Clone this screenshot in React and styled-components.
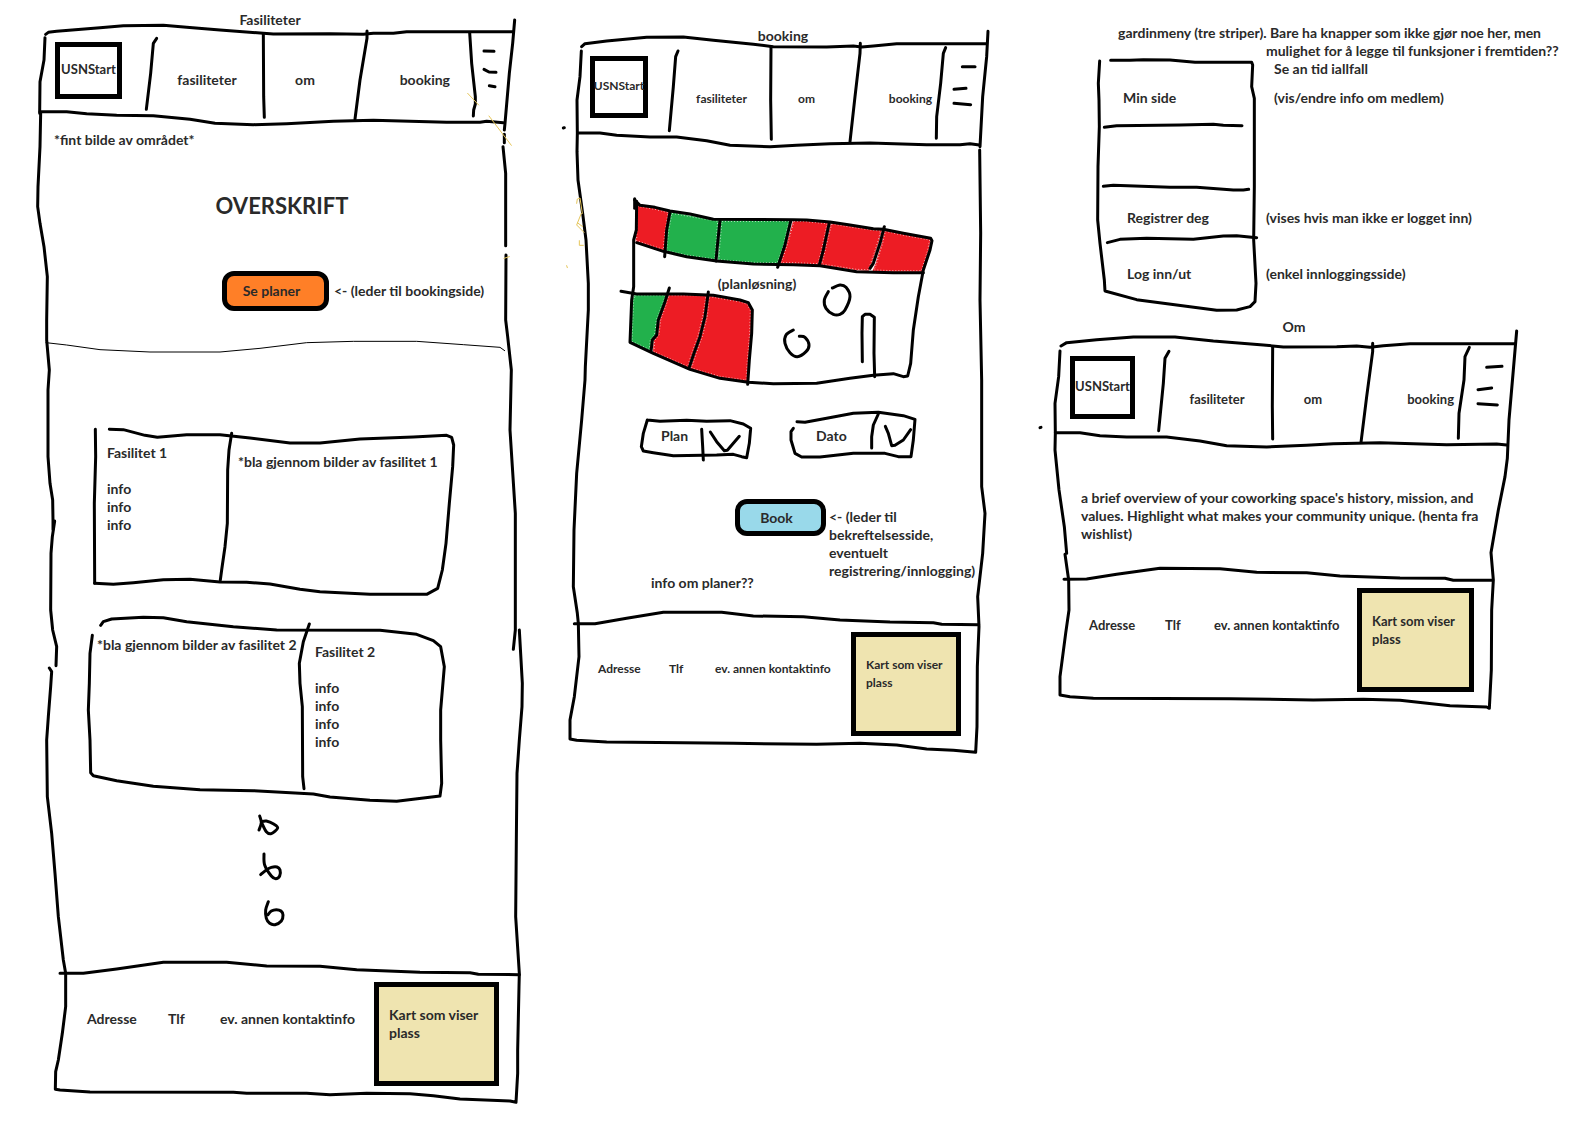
import React from "react";
import styled, { createGlobalStyle, css } from "styled-components";

const GlobalStyle = createGlobalStyle`
  *, *::before, *::after { box-sizing: border-box; }
  body {
    margin: 0;
    background: #fff;
    color: #2a2a2a;
    font: 700 14px/18px Lato, "Open Sans", sans-serif;
  }
  h1, h2, h3, p, ul, figure { margin: 0; padding: 0; font: inherit; list-style: none; }
`;

/* ---------- hand-drawn ink ---------- */

const InkLayer = styled.svg`
  position: absolute;
  inset: 0;
  width: 100%;
  height: 100%;
  overflow: visible;
  pointer-events: none;
  z-index: 0;
`;

const ink = css`
  fill: none;
  stroke: ${(p) => p.$color || "#000"};
  stroke-width: ${(p) => p.$width || 3}px;
  stroke-linecap: round;
  stroke-linejoin: round;
  vector-effect: non-scaling-stroke;
`;

const Stroke = styled.polyline`${ink}`;
const Curve = styled.path`${ink}`;

const DeskFill = styled.polygon`
  fill: ${(p) => (p.$free ? "#22b14c" : "#ed1c24")};
  stroke: ${(p) => (p.$free ? "#22b14c" : "#ed1c24")};
  stroke-width: 2px;
  vector-effect: non-scaling-stroke;
`;

const DeskEdge = styled.polygon`
  fill: none;
  stroke: #fff;
  stroke-opacity: 0.7;
  stroke-width: 1px;
  stroke-dasharray: 1 2;
  vector-effect: non-scaling-stroke;
`;

const Strokes = ({ lines, color, width }) =>
  lines.map((points) => <Stroke key={points} points={points} $color={color} $width={width} />);

/* Runs a smooth curve through every listed point. */
function curveThrough(points) {
  const p = points.split(" ").map((pair) => pair.split(",").map(Number));
  let d = `M${p[0]}`;
  for (let i = 0; i < p.length - 1; i += 1) {
    const before = p[i - 1] || p[i];
    const from = p[i];
    const to = p[i + 1];
    const after = p[i + 2] || to;
    const a = [from[0] + (to[0] - before[0]) / 6, from[1] + (to[1] - before[1]) / 6];
    const b = [to[0] - (after[0] - from[0]) / 6, to[1] - (after[1] - from[1]) / 6];
    d += `C${a} ${b} ${to}`;
  }
  return d;
}

const Curves = ({ lines }) => lines.map((points) => <Curve key={points} d={curveThrough(points)} />);

const YELLOW = "#e6c65a";

/* ---------- shared parts ---------- */

const Board = styled.main`
  display: grid;
  grid-template-columns: 540fr 500fr 552fr;
  align-items: start;
`;

const Screen = styled.section`
  position: relative;
  padding: ${(p) => p.$pad};
`;

const Content = styled.div`
  position: relative;
  z-index: 1;
`;

const ScreenTitle = styled.h2`
  text-align: center;
`;

const Header = styled.header`
  display: grid;
  grid-template-columns: ${(p) => p.$columns};
  align-items: start;
  padding: ${(p) => p.$top}px 0 24px;
`;

const Logo = styled.a`
  display: flex;
  justify-content: center;
  width: ${(p) => p.$width}px;
  height: ${(p) => p.$height}px;
  margin-left: ${(p) => p.$left}px;
  padding-top: ${(p) => p.$textTop}px;
  border: 5px solid #000;
  color: inherit;
  font-size: ${(p) => p.$size}px;
  text-decoration: none;
`;

const NavLink = styled.a`
  margin-top: ${(p) => p.$drop}px;
  padding-right: ${(p) => p.$right || 0}px;
  color: inherit;
  font-size: ${(p) => p.$size}px;
  text-align: ${(p) => (p.$right ? "right" : "center")};
  text-decoration: none;
`;

const MenuButton = styled.button`
  height: 55px;
  padding: 0;
  border: 0;
  background: none;
  cursor: pointer;

  svg { display: block; width: 100%; height: 100%; overflow: visible; }
`;

const Footer = styled.footer`
  display: grid;
  grid-template-columns: ${(p) => p.$columns};
  align-items: start;
  padding: 10px ${(p) => p.$right}px 0 ${(p) => p.$left}px;
`;

const Contact = styled.span`
  margin-top: 28px;
  font-size: ${(p) => p.$size}px;
  white-space: nowrap;
`;

const MapBox = styled.div`
  height: 104px;
  padding: 19px 10px;
  border: 5px solid #000;
  background: #efe4b0;
  font-size: ${(p) => p.$size}px;
`;

const ActionButton = styled.button`
  flex: none;
  width: ${(p) => p.$width}px;
  height: ${(p) => p.$height}px;
  padding: 0 8px 0 0;
  border: 5px solid #000;
  border-radius: 12px;
  background: ${(p) => p.$fill};
  color: inherit;
  font: inherit;
  cursor: pointer;
`;

function SiteHeader({ columns, top, logo, drop, bookingRight, size, menuBox, menuLines }) {
  return (
    <Header $columns={columns} $top={top}>
      <Logo
        href="#start"
        $width={logo.width}
        $height={logo.height}
        $left={logo.left}
        $textTop={logo.textTop}
        $size={logo.size}
      >
        USNStart
      </Logo>
      <NavLink href="#fasiliteter" $drop={drop} $size={size}>fasiliteter</NavLink>
      <NavLink href="#om" $drop={drop} $size={size}>om</NavLink>
      <NavLink href="#booking" $drop={drop} $size={size} $right={bookingRight}>booking</NavLink>
      <MenuButton type="button" aria-label="Meny">
        <svg viewBox={menuBox} preserveAspectRatio="none" aria-hidden="true">
          <Strokes lines={menuLines} />
        </svg>
      </MenuButton>
    </Header>
  );
}

function SiteFooter({ columns, left, right, size }) {
  return (
    <Footer $columns={columns} $left={left} $right={right}>
      <Contact $size={size}>Adresse</Contact>
      <Contact $size={size}>Tlf</Contact>
      <Contact $size={size}>ev. annen kontaktinfo</Contact>
      <MapBox $size={size}>Kart som viser plass</MapBox>
    </Footer>
  );
}

/* ---------- Fasiliteter ---------- */

const Hero = styled.section`
  padding: 8px 0 36px;
`;

const HeroCaption = styled.p`
  padding-left: 16px;
`;

const Headline = styled.h1`
  margin-top: 42px;
  padding-left: 24px;
  font-size: 22px;
  line-height: 30px;
  font-weight: 700;
  text-align: center;
`;

const HeroAction = styled.div`
  display: flex;
  align-items: center;
  gap: 5px;
  margin-top: 50px;
  padding-left: 184px;
  white-space: nowrap;
`;

const Facilities = styled.section`
  display: grid;
  gap: 23px;
  padding: 83px 54px 0;
`;

const Facility = styled.article`
  display: grid;
  grid-template-columns: ${(p) => p.$columns};
  min-height: ${(p) => p.$height}px;
`;

const FacilityCell = styled.div`
  padding: ${(p) => p.$top}px 0 0 ${(p) => p.$left}px;
  white-space: nowrap;

  ul { margin-top: 18px; }
`;

const More = styled.svg`
  display: block;
  width: 34px;
  height: 114px;
  margin: 11px auto 45px;
  overflow: visible;
`;

const FacilityInfo = ({ name, lines, top, left }) => (
  <FacilityCell $top={top} $left={left}>
    <h3>{name}</h3>
    <ul>
      {Array.from({ length: lines }, (_, i) => <li key={i}>info</li>)}
    </ul>
  </FacilityCell>
);

function FacilitiesScreen() {
  return (
    <Screen $pad="11px 38px 38px" id="fasiliteter">
      <InkLayer viewBox="-60 0 1620 3372" preserveAspectRatio="none" aria-hidden="true">
        <Strokes
          lines={[
            "77,103 85,97 110,94 240,83 310,77 430,76 500,82 600,90 730,100 760,102 930,101 1030,103 1060,100 1120,100 1160,95 1478,95",
            "75,113 72,180 60,245 59,340",
            "62,340 60,440 54,560 53,620 60,670 72,740 82,830 80,960 80,1020 88,1110 84,1170 84,1370 90,1450 98,1500 99,1560 99,1588",
            "60,335 140,335 200,341 290,346 400,347 510,358 585,370 700,374 800,371 940,364 1060,361 1280,367 1380,367 1400,364 1450,368",
            "410,115 400,130 392,220 379,328",
            "730,102 731,290 733,352",
            "1041,93 1041,115 1020,240 1005,357",
            "1349,98 1355,190 1366,290 1366,312 1361,330 1360,348",
            "1484,60 1478,130 1468,220 1455,370 1453,390",
            "1453,403 1453,428",
            "1449,440 1457,520 1457,737",
            "1458,765 1457,960 1463,1010 1474,1110 1470,1290 1477,1400 1486,1540 1486,1890 1480,1948",
          ]}
        />
        <Strokes width={1} lines={["78,1028 140,1035 240,1049 390,1056 600,1056 720,1045 860,1028 1000,1024 1190,1024 1330,1034 1440,1042 1454,1052"]} />
        <Strokes width={1} color={YELLOW} lines={["1343,280 1376,315", "1407,348 1474,436", "1452,775 1468,770"]} />
        <g transform="translate(0 1110)">
          <Strokes
            lines={[
              "104,453 97,500 93,550 92,720 98,780 110,830 108,887",
              "226,178 227,260 223,400 224,640",
              "268,178 310,179 375,196 412,202 500,194 600,194 690,204 810,219 900,219 1020,207 1180,201 1280,196 1295,202 1301,225 1298,290 1288,400 1278,520 1267,600 1253,655 1220,673 1050,673 900,665 840,658 750,642 680,637 600,636 510,628 430,629 340,638 280,643 224,640",
              "635,190 627,240 623,300 622,460 615,530 605,600 601,630",
              "242,766 250,755 275,747 370,742 430,743 500,755 640,770 770,780 1080,781 1190,793 1240,812 1262,830 1273,890 1262,1020 1262,1110 1265,1240 1260,1278 1130,1294 1050,1291 930,1281 880,1272 700,1262 540,1259 400,1249 290,1232 220,1217 212,1208 210,1110 205,1020 208,940 210,850 217,796",
              "868,762 850,815 838,880 840,940 847,1010 848,1220 852,1256",
            ]}
          />
        </g>
        <g transform="translate(0 2220)">
          <Strokes
            lines={[
              "88,-216 95,-205 92,-160 85,-70 80,0 82,170 95,280 105,400 115,530 130,660 137,700 137,800 127,880 115,960 107,995 106,1048 120,1050 210,1056 640,1057 680,1060 860,1060 930,1064 1040,1060 1170,1061 1240,1067 1320,1077 1470,1083 1488,1087 1493,1000 1493,930 1497,740 1498,700 1487,530 1489,300 1491,100 1498,0 1506,-100 1507,-170 1498,-330",
              "120,700 190,700 290,687 430,667 620,667 740,678 900,679 1010,689 1200,697 1350,698 1375,703 1498,704",
            ]}
          />
        </g>
      </InkLayer>
      <Content>
        <ScreenTitle>Fasiliteter</ScreenTitle>
        <SiteHeader
          columns="114fr 110fr 86fr 124fr 30fr"
          top={13}
          logo={{ width: 67, height: 57, left: 17, textTop: 13, size: 13 }}
          drop={29}
          bookingRight={22}
          size={14}
          menuBox="1356 126 90 165"
          menuLines={["1392,153 1422,154", "1392,208 1407,216 1428,217", "1408,257 1425,260"]}
        />
        <Hero>
          <HeroCaption>*fint bilde av området*</HeroCaption>
          <Headline>OVERSKRIFT</Headline>
          <HeroAction>
            <ActionButton type="button" $width={107} $height={40} $fill="#ff7f27">Se planer</ActionButton>
            <span>&lt;- (leder til bookingside)</span>
          </HeroAction>
        </Hero>
        <Facilities>
          <Facility $columns="136fr 220fr" $height={165}>
            <FacilityInfo name="Fasilitet 1" lines={3} top={14} left={15} />
            <FacilityCell $top={23} $left={10}>*bla gjennom bilder av fasilitet 1</FacilityCell>
          </Facility>
          <Facility $columns="208fr 148fr" $height={184}>
            <FacilityCell $top={18} $left={5}>*bla gjennom bilder av fasilitet 2</FacilityCell>
            <FacilityInfo name="Fasilitet 2" lines={4} top={25} left={15} />
          </Facility>
        </Facilities>
        <More viewBox="700 219 102 342" aria-hidden="true">
          <Curves
            lines={[
              "720,228 725,248 718,270",
              "725,245 740,243 762,252 774,264 755,281 740,275 726,248",
              "733,342 735,375 755,408 768,416 780,408 781,390 772,381 755,382 740,390 723,404",
              "746,485 738,510 740,535 750,550 766,554 785,543 790,525 784,513 770,509 755,513 745,524",
            ]}
          />
        </More>
        <SiteFooter columns="81fr 52fr 154fr 125fr" left={49} right={3} size={14} />
      </Content>
    </Screen>
  );
}

/* ---------- booking ---------- */

const FloorPlan = styled.figure`
  position: relative;
  height: 190px;
  margin: 55px 57px 0 45px;
  padding: 78px 40px 0 0;
  text-align: center;
`;

const PlanCaption = styled.figcaption`
  position: relative;
  z-index: 1;
`;

const Filters = styled.div`
  display: flex;
  gap: 39px;
  margin-top: 33px;
  padding-left: 65px;
`;

const SelectBox = styled.div`
  position: relative;
  width: ${(p) => p.$width}px;
  height: 38px;

  select {
    position: relative;
    z-index: 1;
    width: 100%;
    height: 32px;
    padding: 0 0 0 ${(p) => p.$left}px;
    border: 0;
    background: transparent;
    appearance: none;
    color: inherit;
    font: inherit;
  }
`;

const BookArea = styled.div`
  display: grid;
  grid-template-columns: 250fr 161fr;
  column-gap: 3px;
  margin-top: 41px;
  padding-bottom: 30px;
`;

const BookColumn = styled.div`
  display: flex;
  flex-direction: column;
  align-items: flex-start;
  gap: 38px;
  padding-left: 75px;

  button { align-self: flex-end; }
`;

const BookNote = styled.p`
  max-width: 150px;
  padding-top: 9px;
`;

function Choice({ name, width, left, box, lines }) {
  return (
    <SelectBox $width={width} $left={left}>
      <InkLayer viewBox={box} preserveAspectRatio="none" aria-hidden="true">
        <Strokes lines={lines} />
      </InkLayer>
      <select aria-label={name} defaultValue={name}>
        <option>{name}</option>
      </select>
    </SelectBox>
  );
}

const DESKS = [
  ["292,619 345,628 384,638 374,700 370,748 290,722", false],
  ["396,640 450,650 520,662 533,664 527,740 524,777 440,765 380,751 386,692", true],
  ["546,664 746,664 730,735 712,788 640,787 537,779 539,740", true],
  ["762,664 800,665 861,671 844,750 834,791 760,788 724,788 742,735", false],
  ["875,672 930,681 1000,691 1022,693 1012,730 992,790 984,809 950,808 846,792 856,750", false],
  ["1036,694 1090,706 1169,720 1163,750 1144,812 1060,812 1002,810 1010,790 1028,730", false],
  ["286,887 376,887 366,915 349,960 344,1003 331,1018 328,1048 276,1024 281,900", true],
  ["386,887 498,887 488,950 473,1010 455,1060 443,1099 342,1055 344,1022 357,1005 362,960 380,910", false],
  ["508,890 598,905 622,913 631,932 629,1000 622,1080 618,1140 540,1129 455,1104 469,1060 487,1010 502,950", false],
];

function BookingScreen() {
  return (
    <Screen $pad="27px 50px 24px 36px" id="booking">
      <InkLayer viewBox="0 0 1500 2280" preserveAspectRatio="none" aria-hidden="true">
        <Strokes
          lines={[
            "125,140 135,131 200,123 320,112 430,111 520,121 640,133 700,140 860,141 940,138 965,141 1000,138 1070,131 1340,131",
            "1344,94 1340,170 1328,290 1320,440",
            "124,153 120,230 111,300 112,400 111,455 114,540 128,640 138,720 145,850 145,930 136,1100 135,1140 125,1260 110,1420 102,1590 100,1760 112,1840 115,1870 117,1970 103,2090 90,2160 90,2217 110,2221 200,2226 580,2230 830,2233 960,2230 1070,2235 1160,2247 1240,2251 1307,2257 1311,2180 1312,2000 1317,1880 1313,1790 1328,1660 1335,1540 1325,1460 1325,1140 1320,900 1322,700 1319,450",
            "113,399 180,399 230,406 330,411 410,411 500,422 570,436 690,440 770,436 870,431 990,429 1160,434 1260,434 1290,431 1318,435",
            "414,153 407,170 400,260 388,392",
            "693,140 692,300 694,418",
            "961,130 960,160 945,290 930,425",
            "1217,143 1210,160 1202,250 1190,350 1189,415",
            "70,384 73,383",
            "103,1871 165,1871 260,1855 370,1837 545,1837 640,1848 790,1850 900,1860 1050,1866 1180,1868 1205,1873 1316,1874",
          ]}
        />
        <Strokes
          width={1}
          color={YELLOW}
          lines={["110,610 112,597 120,594 127,640", "124,640 110,675 132,697", "112,668 128,680", "118,722 118,736 130,736", "80,797 82,803"]}
        />
      </InkLayer>
      <Content>
        <ScreenTitle>booking</ScreenTitle>
        <SiteHeader
          columns="96fr 99fr 71fr 96fr 52fr"
          top={11}
          logo={{ width: 58, height: 62, left: 14, textTop: 16, size: 12 }}
          drop={34}
          bookingRight={6}
          size={12}
          menuBox="1194 168 156 165"
          menuLines={["1267,200 1305,200", "1242,268 1278,265", "1242,310 1292,314"]}
        />
        <FloorPlan>
          <InkLayer viewBox="243 591 936 570" preserveAspectRatio="none" aria-hidden="true">
            {DESKS.map(([points, free]) => (
              <React.Fragment key={points}>
                <DeskFill points={points} $free={free} />
                <DeskEdge points={points} />
              </React.Fragment>
            ))}
            <Strokes
              lines={[
                "284,596 284,625",
                "284,600 300,616 345,622 390,633 450,642 520,658 760,659 800,660 870,666 930,675 1000,686 1030,688 1090,700 1172,715 1176,722 1170,750 1150,810 1135,890 1120,990 1112,1090 1103,1128 1090,1130 1060,1121 1000,1126 930,1135 830,1150 700,1151 625,1147 540,1135 450,1108 340,1060 270,1027 275,900 281,860 281,720 289,690 290,604",
                "290,728 370,754 440,770 530,783 640,792 760,794 840,797 950,815 1060,818 1150,818",
                "390,636 380,690 374,770",
                "540,660 532,740 528,783",
                "752,664 735,735 713,802",
                "868,668 850,750 838,795",
                "1033,680 1020,730 1000,790 990,805",
                "243,874 290,882 430,882 520,886 600,900 625,908 637,930 635,1000 628,1080 623,1153",
                "388,864 375,905 355,960 350,1005 337,1020 333,1055",
                "505,876 495,950 480,1010 462,1060 447,1105",
                "967,1085 966,1000 967,950 975,943 990,943 1003,952 1002,1060 1004,1130",
              ]}
            />
            <Curves
              lines={[
                "877,864 900,855 918,862 930,890 915,930 900,943 880,943 858,925 853,900 865,875",
                "760,990 738,1005 735,1030 750,1058 772,1070 798,1055 807,1035 795,1012 778,1009",
              ]}
            />
          </InkLayer>
          <PlanCaption>(planløsning)</PlanCaption>
        </FloorPlan>
        <Filters>
          <Choice
            name="Plan"
            width={110}
            left={20}
            box="303 120 330 114"
            lines={[
              "322,120 360,124 440,121 500,124 570,122 610,132 632,145 628,190 620,233 605,230 580,223 530,225 400,227 340,218 310,213 304,200 310,160 322,120",
              "485,148 488,200 490,240",
              "511,156 530,185 553,212 562,211 598,169",
            ]}
          />
          <Choice
            name="Dato"
            width={125}
            left={26}
            box="750 120 375 114"
            lines={[
              "771,125 795,127 860,115 940,100 1015,97 1090,107 1125,118 1120,180 1113,230 1075,230 1035,220 940,220 840,231 785,231 765,220 753,180 753,155 760,145",
              "1015,102 1000,135 995,170 995,204",
              "1036,139 1045,160 1055,197 1065,196 1090,180 1112,149",
            ]}
          />
        </Filters>
        <BookArea>
          <BookColumn>
            <ActionButton type="button" $width={91} $height={37} $fill="#99d9ea">Book</ActionButton>
            <p>info om planer??</p>
          </BookColumn>
          <BookNote>&lt;- (leder til bekreftelsesside, eventuelt registrering/innlogging)</BookNote>
        </BookArea>
        <SiteFooter columns="71fr 46fr 136fr 110fr" left={22} right={29} size={12} />
      </Content>
    </Screen>
  );
}

/* ---------- gardinmeny ---------- */

const Intro = styled.p`
  white-space: nowrap;
`;

const IntroLine = styled.span`
  display: block;
  padding-left: ${(p) => p.$left}px;
`;

const MenuRow = styled.li`
  display: grid;
  grid-template-columns: 186fr 326fr;
  align-items: center;
  height: ${(p) => p.$height}px;
`;

const MenuItem = styled.button`
  padding: 0 0 0 ${(p) => p.$left}px;
  border: 0;
  background: none;
  color: inherit;
  font: inherit;
  text-align: left;
  cursor: pointer;
`;

const MenuNote = styled.span`
  padding-left: ${(p) => p.$left || 0}px;
`;

function CurtainMenu() {
  return (
    <Screen $pad="24px 0 19px 40px">
      <InkLayer viewBox="-120 0 1656 954" preserveAspectRatio="none" aria-hidden="true">
        <Strokes
          lines={[
            "92,181 150,181 190,179 270,180 345,187 515,187 518,195 515,260 523,295 523,560 521,720 528,850 525,905 510,920 470,930 410,931 330,920 170,899 75,873 73,840 60,730 53,660 54,500 58,380 57,300 55,250 59,183",
            "73,382 110,377 300,375 400,373 430,376 486,377",
            "70,559 100,556 270,562 350,562 460,570 490,570 506,568",
            "82,728 120,718 200,715 340,718 430,708 470,707 530,713",
          ]}
        />
      </InkLayer>
      <Content>
        <Intro>
          <IntroLine $left={38}>gardinmeny (tre striper). Bare ha knapper som ikke gjør noe her, men</IntroLine>
          <IntroLine $left={186}>mulighet for å legge til funksjoner i fremtiden??</IntroLine>
          <IntroLine $left={194}>Se an tid iallfall</IntroLine>
        </Intro>
        <ul>
          <MenuRow $height={39}>
            <MenuItem type="button" $left={43}>Min side</MenuItem>
            <MenuNote $left={8}>(vis/endre info om medlem)</MenuNote>
          </MenuRow>
          <MenuRow $height={70} />
          <MenuRow $height={61}>
            <MenuItem type="button" $left={47}>Registrer deg</MenuItem>
            <MenuNote>(vises hvis man ikke er logget inn)</MenuNote>
          </MenuRow>
          <MenuRow $height={51}>
            <MenuItem type="button" $left={47}>Log inn/ut</MenuItem>
            <MenuNote>(enkel innloggingsside)</MenuNote>
          </MenuRow>
        </ul>
      </Content>
    </Screen>
  );
}

/* ---------- Om ---------- */

const OmBody = styled.p`
  max-width: 430px;
  padding: 46px 0 35px 25px;
`;

function OmScreen() {
  return (
    <Screen $pad="0 60px 24px 16px" id="om">
      <InkLayer viewBox="30 24 1656 1194" preserveAspectRatio="none" aria-hidden="true">
        <Strokes
          lines={[
            "93,108 110,98 200,89 310,81 435,81 550,93 700,105 760,111 920,110 980,108 1020,112 1060,107 1140,101 1455,101",
            "1460,63 1450,180 1437,330 1432,445 1425,500 1405,600 1383,728 1390,810 1385,900 1384,1080 1378,1195 1370,1191 1260,1187 1110,1171 1000,1168 850,1170 600,1166 190,1165 120,1160 90,1155 90,1100 107,970 117,900 116,810 105,733",
            "90,123 86,200 75,280 76,370 75,420 87,540 103,650 110,730",
            "76,368 150,368 210,377 290,381 410,381 510,393 590,407 710,411 830,406 910,401 1050,398 1250,404 1400,402 1430,405",
            "417,124 405,145 400,220 386,362",
            "728,110 727,290 728,387",
            "1028,100 1028,125 1010,260 993,397",
            "1318,112 1305,140 1302,210 1287,310 1285,385",
            "102,808 170,807 260,793 390,775 570,776 680,787 830,788 930,798 1110,804 1245,805 1270,811 1388,811",
            "30,353 33,352",
          ]}
        />
      </InkLayer>
      <Content>
        <ScreenTitle>Om</ScreenTitle>
        <SiteHeader
          columns="105fr 112fr 80fr 107fr 50fr 22fr"
          top={20}
          logo={{ width: 65, height: 63, left: 14, textTop: 16, size: 13 }}
          drop={34}
          bookingRight={6}
          size={13}
          menuBox="1290 138 150 165"
          menuLines={["1370,172 1416,169", "1344,239 1385,234", "1344,281 1402,285"]}
        />
        <OmBody>
          a brief overview of your coworking space's history, mission, and values. Highlight what makes your community
          unique. (henta fra wishlist)
        </OmBody>
        <SiteFooter columns="76fr 49fr 143fr 117fr" left={33} right={58} size={13} />
      </Content>
    </Screen>
  );
}

export default function App() {
  return (
    <>
      <GlobalStyle />
      <Board>
        <FacilitiesScreen />
        <BookingScreen />
        <div>
          <CurtainMenu />
          <OmScreen />
        </div>
      </Board>
    </>
  );
}
